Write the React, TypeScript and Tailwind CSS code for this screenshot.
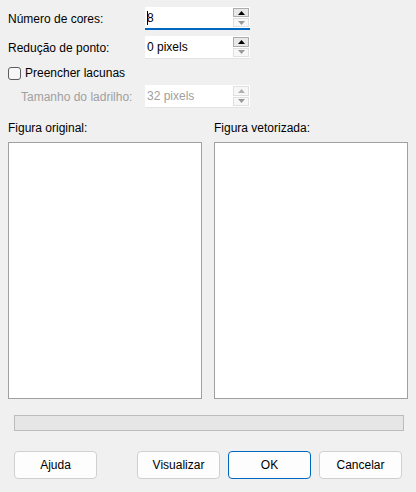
import type { ReactNode } from "react";

const FONT = { fontFamily: '"Segoe UI", "Liberation Sans", Arial, sans-serif' };

function Arrow({ up, color }: { up: boolean; color: string }) {
  return (
    <svg width="7" height="4" viewBox="0 0 7 4" aria-hidden>
      {up ? (
        <path d="M0 4 L3.5 0 L7 4 Z" fill={color} />
      ) : (
        <path d="M0 0 L7 0 L3.5 4 Z" fill={color} />
      )}
    </svg>
  );
}

function SpinBox({
  value,
  focused = false,
  disabled = false,
  caret = false,
}: {
  value: string;
  focused?: boolean;
  disabled?: boolean;
  caret?: boolean;
}) {
  return (
    <div
      className={
        "relative flex h-[23px] w-[105px] items-stretch bg-white " +
        (focused ? "border-b-2 border-[#0067c0]" : "border-b border-[#e3e3e3]")
      }
    >
      <div
        className={
          "flex flex-1 items-center pl-[2px] text-[12px] " +
          (disabled ? "text-[#a0a0a0]" : "text-black")
        }
      >
        {caret && <span className="mr-[-1px] inline-block h-[14px] w-px bg-black" />}
        {value}
      </div>
      <div className="flex w-[17px] flex-col gap-px py-[1px] pr-[1px]">
        <div
          className={
            "flex flex-1 items-center justify-center border " +
            (disabled ? "border-[#e0e0e0] bg-[#f7f7f7]" : "border-[#adadad] bg-[#e8e8e8]")
          }
        >
          <Arrow up color={disabled ? "#b0b0b0" : "#000"} />
        </div>
        <div className="flex flex-1 items-center justify-center border border-[#e0e0e0] bg-[#f7f7f7]">
          <Arrow up={false} color="#9a9a9a" />
        </div>
      </div>
    </div>
  );
}

function Row({ label, children, className = "", muted = false }: { label: string; children: ReactNode; className?: string; muted?: boolean }) {
  return (
    <div className={"flex items-center " + className}>
      <span
        className={
          "w-[137px] text-[12px] " + (muted ? "pl-[13px] text-[#a0a0a0]" : "text-black")
        }
      >
        {label}
      </span>
      {children}
    </div>
  );
}

function Button({ label, primary = false }: { label: string; primary?: boolean }) {
  return (
    <button
      type="button"
      className={
        "flex h-[28px] w-[83px] items-center justify-center rounded-[4px] text-[12px] text-black " +
        (primary
          ? "border border-[#0067c0] bg-[#fdfdfd]"
          : "border border-[#d0d0d0] bg-[#fdfdfd]")
      }
    >
      {label}
    </button>
  );
}

export default function App() {
  return (
    <div style={FONT} className="flex h-[492px] w-[416px] flex-col bg-[#f0f0f0]">
      {/* Parameters */}
      <div className="flex flex-col px-[8px]">
        <Row label="Número de cores:" className="mt-[7px]">
          <SpinBox value="8" focused caret />
        </Row>
        <Row label="Redução de ponto:" className="mt-[6px]">
          <SpinBox value="0 pixels" />
        </Row>
        <label className="mt-[4px] flex h-[20px] items-center gap-[4px] text-[12px] text-black">
          <span className="inline-block h-[13px] w-[13px] rounded-[3px] border border-[#5c5c5c] bg-[#f7f7f7]" />
          Preencher lacunas
        </label>
        <Row label="Tamanho do ladrilho:" className="mt-[2px]" muted>
          <SpinBox value="32 pixels" disabled />
        </Row>
      </div>

      {/* Previews */}
      <div className="mt-[12px] grid grid-cols-2 gap-[12px] px-[8px]">
        <div className="flex flex-col">
          <span className="h-[16px] text-[12px] leading-[16px] text-black">Figura original:</span>
          <div className="mt-[6px] h-[257px] border border-[#a0a0a0] bg-white" />
        </div>
        <div className="flex flex-col">
          <span className="h-[16px] text-[12px] leading-[16px] text-black">Figura vetorizada:</span>
          <div className="mt-[6px] h-[257px] border border-[#a0a0a0] bg-white" />
        </div>
      </div>

      {/* Progress */}
      <div className="mx-[14px] mt-[16px] mr-[12px] h-[16px] border border-[#bcbcbc] bg-[#e6e6e6]" />

      {/* Buttons */}
      <div className="mt-[20px] flex items-center pl-[14px]">
        <Button label="Ajuda" />
        <div className="ml-[40px] flex gap-[8px]">
          <Button label="Visualizar" />
          <Button label="OK" primary />
          <Button label="Cancelar" />
        </div>
      </div>
    </div>
  );
}
